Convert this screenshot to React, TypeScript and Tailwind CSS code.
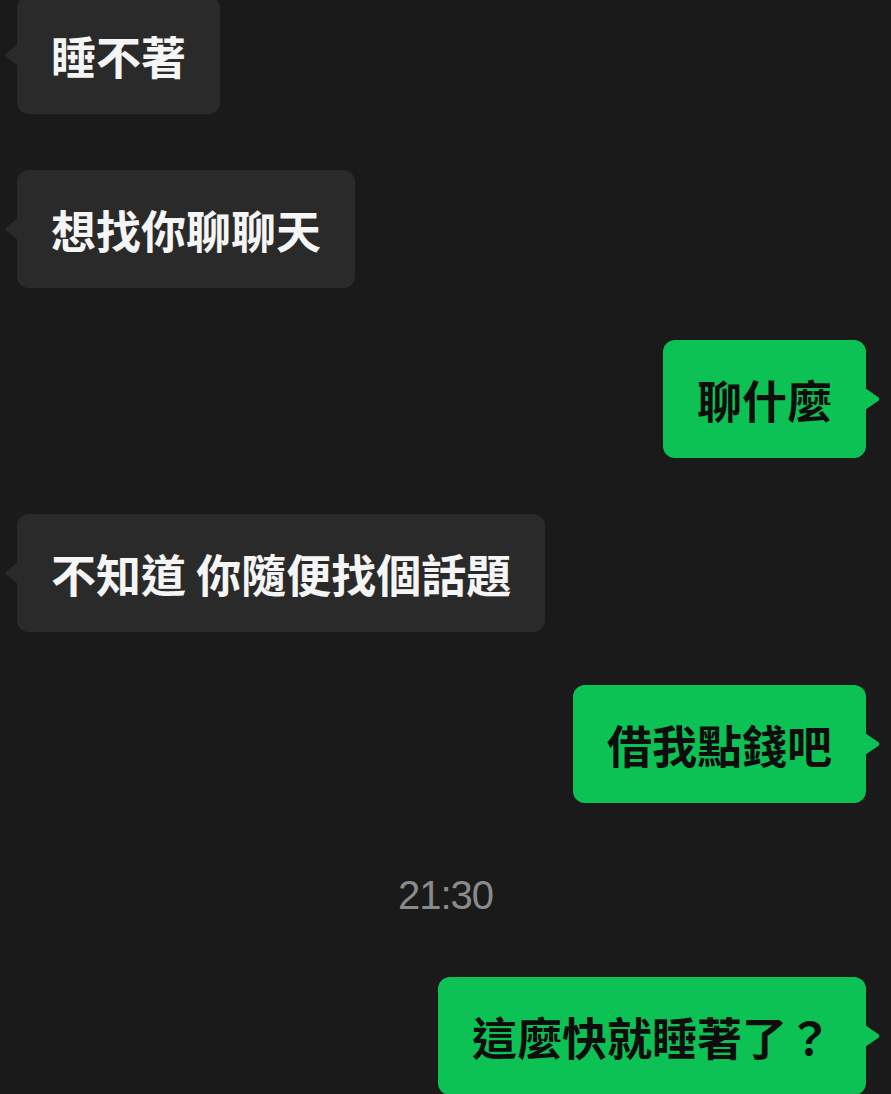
import React from "react";

const font = { fontFamily: '"Noto Sans CJK TC", "Noto Sans CJK SC", sans-serif' };

function Left({ text, mt }: { text: string; mt: string }) {
  return (
    <div className={`flex justify-start pl-[17px] ${mt}`}>
      <div className="relative flex h-[118px] items-center rounded-[12px] bg-[#2a2a2a] px-[34px]">
        <svg className="absolute left-[-12px] top-[48px]" width="13" height="22" viewBox="0 0 13 22">
          <path d="M13 0 L1.2 9.6 Q0 11 1.2 12.4 L13 22 Z" fill="#2a2a2a" />
        </svg>
        <span className="whitespace-pre text-[45px] font-bold leading-none text-[#f5f5f5]" style={font}>
          {text}
        </span>
      </div>
    </div>
  );
}

function Right({ text, mt }: { text: string; mt: string }) {
  return (
    <div className={`flex justify-end pr-[25px] ${mt}`}>
      <div className="relative flex h-[118px] items-center rounded-[12px] bg-[#0dc254] px-[34px]">
        <svg className="absolute right-[-14px] top-[48px]" width="15" height="22" viewBox="0 0 15 22">
          <path d="M0 0 L13.8 9.6 Q15 11 13.8 12.4 L0 22 Z" fill="#0dc254" />
        </svg>
        <span className="whitespace-pre text-[45px] font-bold leading-none text-[#0d0d0d]" style={font}>
          {text}
        </span>
      </div>
    </div>
  );
}

export default function App() {
  return (
    <div className="h-[1094px] w-[891px] overflow-hidden bg-[#1a1a1a]">
      <div className="flex flex-col">
        <Left text="睡不著" mt="-mt-[4px]" />
        <Left text="想找你聊聊天" mt="mt-[56px]" />
        <Right text="聊什麼" mt="mt-[52px]" />
        <Left text="不知道 你隨便找個話題" mt="mt-[56px]" />
        <Right text="借我點錢吧" mt="mt-[53px]" />
        <div className="flex h-[174px] items-center justify-center pt-[10px]">
          <span
            className="text-[40px] leading-none tracking-[-1px] text-[#8a8a8a]"
            style={{ fontFamily: '"Liberation Sans", Arial, sans-serif' }}
          >
            21:30
          </span>
        </div>
        <Right text="這麼快就睡著了？" mt="mt-0" />
      </div>
    </div>
  );
}
